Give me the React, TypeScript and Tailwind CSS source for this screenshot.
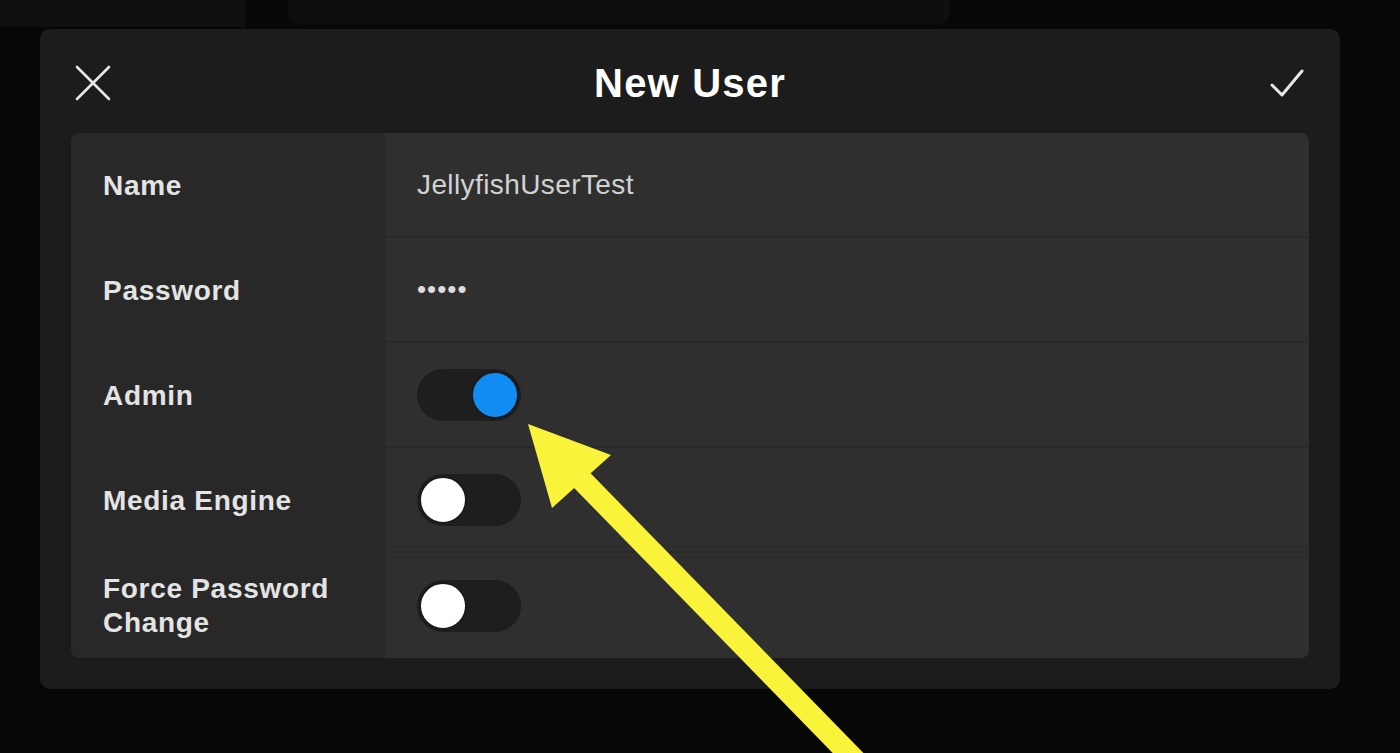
import { useState } from "react";

type Row = {
  label: string;
  kind: "text" | "password" | "toggle";
  value?: string;
  on?: boolean;
};

const rows: Row[] = [
  { label: "Name", kind: "text", value: "JellyfishUserTest" },
  { label: "Password", kind: "password", value: "•••••" },
  { label: "Admin", kind: "toggle", on: true },
  { label: "Media Engine", kind: "toggle", on: false },
  { label: "Force Password Change", kind: "toggle", on: false },
];

function Toggle({ initial }: { initial: boolean }) {
  const [on, setOn] = useState(initial);
  return (
    <button
      onClick={() => setOn(!on)}
      className={`flex h-[52px] w-[104px] items-center rounded-full bg-[#1e1e1e] px-[2px] ${on ? "justify-end" : "justify-start"}`}
    >
      <span
        className={`block h-[48px] w-[48px] rounded-full border-2 border-[#1a1a1a] ${on ? "bg-[#118cf2]" : "bg-white"}`}
      />
    </button>
  );
}

export default function App() {
  return (
    <div
      className="relative h-[753px] w-[1400px] overflow-hidden bg-[#070707]"
      style={{ fontFamily: '"Liberation Sans", Arial, sans-serif' }}
    >
      {/* panels behind the dialog */}
      <div className="flex items-start">
        <div className="h-[27px] w-[246px] bg-[#0f0f0f]" />
        <div className="ml-[42px] h-[25px] w-[662px] rounded-b-xl bg-[#0e0e0e]" />
      </div>

      {/* dialog */}
      <div className="ml-[40px] mt-[2px] w-[1300px] rounded-[10px] bg-[#1c1c1c] px-[31px] pb-[31px]">
        <div className="flex h-[104px] items-center justify-between pt-[3px]">
          <button className="flex h-[44px] w-[44px] items-center justify-center text-[#e8e8e8]">
            <svg width="36" height="36" viewBox="0 0 36 36" fill="none" stroke="currentColor" strokeWidth="2.6" strokeLinecap="round">
              <path d="M2 2 L34 34 M34 2 L2 34" />
            </svg>
          </button>
          <h1 className="text-[40px] font-bold tracking-[1.2px] text-white">New User</h1>
          <button className="flex h-[44px] w-[44px] items-center justify-center text-[#e8e8e8]">
            <svg width="36" height="30" viewBox="0 0 36 30" fill="none" stroke="currentColor" strokeWidth="3" strokeLinecap="round" strokeLinejoin="round">
              <path d="M3 17 L13 27 L33 3" />
            </svg>
          </button>
        </div>

        <div className="overflow-hidden rounded-lg">
          {rows.map((row, i) => (
            <div key={row.label} className="flex h-[105px]">
              <div className="flex w-[314px] items-center bg-[#282828] pl-[32px] pr-2">
                <span className="text-[28px] font-bold leading-[34px] tracking-[0.7px] text-[#e4e4e4]">
                  {row.label === "Force Password Change" ? (
                    <>
                      Force Password
                      <br />
                      Change
                    </>
                  ) : (
                    row.label
                  )}
                </span>
              </div>
              <div
                className={`flex flex-1 items-center bg-[#2f2f2f] pl-[32px] ${i < rows.length - 1 ? "border-b-2 border-[#2a2a2a]" : ""}`}
              >
                {row.kind === "text" && (
                  <span className="text-[28px] tracking-[0.4px] text-[#d2d2d2]">{row.value}</span>
                )}
                {row.kind === "password" && (
                  <span className="text-[26px] tracking-[1px] text-[#dcdcdc]">{row.value}</span>
                )}
                {row.kind === "toggle" && <Toggle initial={!!row.on} />}
              </div>
            </div>
          ))}
        </div>
      </div>

      {/* annotation arrow */}
      <svg className="pointer-events-none absolute left-0 top-0" width="1400" height="753">
        <line x1="572" y1="470" x2="890" y2="796" stroke="#f9f43a" strokeWidth="22" />
        <polygon points="528,424 611,455 552,508" fill="#f9f43a" />
      </svg>
    </div>
  );
}
